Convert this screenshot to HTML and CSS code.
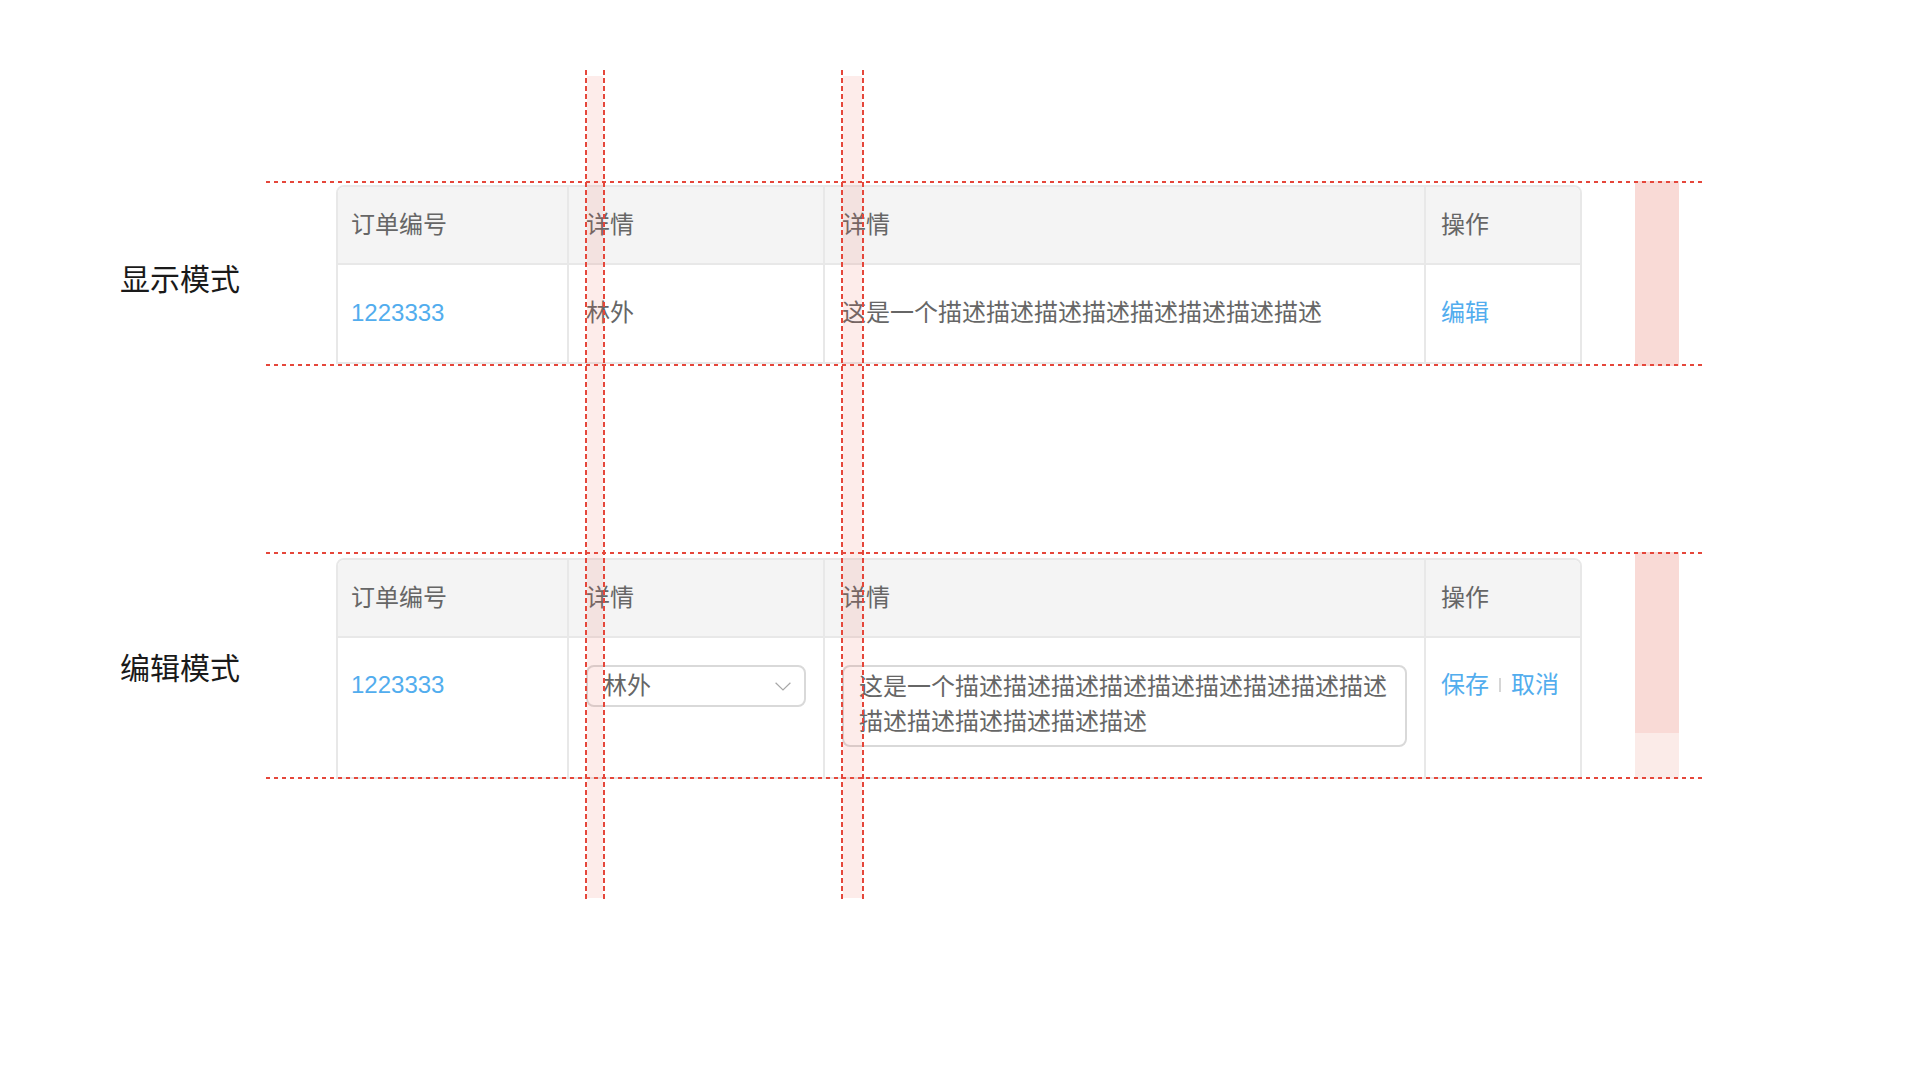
FILE: index.html
```html
<!DOCTYPE html>
<html lang="zh-CN">
<head>
<meta charset="utf-8">
<title>显示模式 / 编辑模式</title>
<link rel="stylesheet" href="styles.css">
</head>
<body>
<div class="page">
  <section class="mode mode-view">
    <h2 class="mode-label">显示模式</h2>
    <div class="frame">
      <div class="table">
        <div class="cell head c1">订单编号</div>
        <div class="cell head">详情</div>
        <div class="cell head">详情</div>
        <div class="cell head c4">操作</div>
        <div class="cell body c1"><a class="link">1223333</a></div>
        <div class="cell body">林外</div>
        <div class="cell body">这是一个描述描述描述描述描述描述描述描述</div>
        <div class="cell body c4"><a class="link">编辑</a></div>
      </div>
      <div class="marker"></div>
    </div>
  </section>

  <section class="mode mode-edit">
    <h2 class="mode-label">编辑模式</h2>
    <div class="frame">
      <div class="table">
        <div class="cell head c1">订单编号</div>
        <div class="cell head">详情</div>
        <div class="cell head">详情</div>
        <div class="cell head c4">操作</div>
        <div class="cell body c1"><a class="link">1223333</a></div>
        <div class="cell body">
          <div class="select">
            <span>林外</span>
            <svg class="chev" width="16" height="9" viewBox="0 0 16 9"><polyline points="0.6,0.8 8,8 15.4,0.8" fill="none" stroke="#a8a8a8" stroke-width="1.2"/></svg>
          </div>
        </div>
        <div class="cell body">
          <div class="textarea">这是一个描述描述描述描述描述描述描述描述描述描述描述描述描述描述描述</div>
        </div>
        <div class="cell body c4">
          <div class="ops"><a class="link">保存</a><span class="sep"></span><a class="link">取消</a></div>
        </div>
      </div>
      <div class="marker marker-split"></div>
    </div>
  </section>

  <div class="guide guide-a"></div>
  <div class="guide guide-b"></div>
</div>
</body>
</html>
```

FILE: styles.css
```css
* {
  box-sizing: border-box;
  margin: 0;
  padding: 0;
}

html,
body {
  background: #ffffff;
}

body {
  width: 1920px;
  height: 1080px;
  overflow: hidden;
  font-family: "Liberation Sans", "Noto Sans CJK SC", sans-serif;
  color: #666666;
}

.page {
  position: relative;
  height: 1080px;
  padding-top: 181px;
}

.mode {
  display: flex;
  align-items: center;
  padding-left: 120px;
}

.mode + .mode {
  margin-top: 186px;
}

.mode-label {
  width: 146px;
  font-size: 30px;
  font-weight: 400;
  line-height: 40px;
  color: #1a1a1a;
  font-family: "Noto Sans CJK SC", sans-serif;
}

.mode-view .mode-label {
  margin-top: 7px;
}

.frame {
  position: relative;
  width: 1436px;
  display: flex;
  padding-left: 70px;
}

.frame::before,
.frame::after {
  content: "";
  position: absolute;
  left: 0;
  right: 0;
  height: 2px;
  background: repeating-linear-gradient(to right, #e5473b 0 4px, transparent 4px 8px);
  z-index: 2;
}

.frame::before {
  top: 0;
}

.frame::after {
  bottom: 0;
}

.mode-view .frame {
  padding-top: 4px;
  padding-bottom: 2px;
}

.mode-edit .frame {
  padding-top: 6px;
}

.table {
  width: 1246px;
  display: grid;
  grid-template-columns: 229px 256px 601px 156px;
  border: 2px solid #e8e8e8;
  border-radius: 8px 8px 0 0;
  overflow: hidden;
}

.cell {
  padding-left: 17px;
  font-size: 24px;
  line-height: 40px;
  border-left: 2px solid #e8e8e8;
}

.cell.c1 {
  border-left: none;
  padding-left: 13px;
}

.cell.c4 {
  padding-left: 15px;
}

.head {
  height: 78px;
  display: flex;
  align-items: center;
  background: #f4f4f4;
  border-bottom: 2px solid #e8e8e8;
}

.body {
  padding-top: 28px;
  padding-bottom: 29px;
}

.mode-edit .body {
  padding-top: 27px;
  padding-bottom: 30px;
}

.link {
  color: #52adee;
  text-decoration: none;
}

.marker {
  position: absolute;
  top: 0;
  bottom: 0;
  right: 23px;
  width: 44px;
  background: #f9dad6;
}

.marker-split {
  background: linear-gradient(to bottom, #f9dad6 0 181px, #fbebe8 181px 100%);
}

.select {
  width: 220px;
  height: 42px;
  display: flex;
  align-items: center;
  justify-content: space-between;
  padding: 0 13px 0 15px;
  border: 2px solid #d9d9d9;
  border-radius: 8px;
  background: #ffffff;
}

.chev {
  display: block;
}

.textarea {
  width: 565px;
  padding: 2px 15px 6px 15px;
  line-height: 35px;
  border: 2px solid #d9d9d9;
  border-radius: 8px;
  background: #ffffff;
}

.ops {
  display: flex;
  align-items: center;
}

.sep {
  width: 2px;
  height: 14px;
  margin: 0 10px;
  background: #d6d6d6;
}

.guide {
  position: absolute;
  top: 70px;
  height: 832px;
  z-index: 5;
  background:
    repeating-linear-gradient(to bottom, #e5473b 0 5px, transparent 5px 8px) left top / 2px 100% no-repeat,
    repeating-linear-gradient(to bottom, #e5473b 0 5px, transparent 5px 8px) right top / 2px 100% no-repeat;
}

.guide::before {
  content: "";
  position: absolute;
  top: 6px;
  bottom: 4px;
  left: 2px;
  right: 2px;
  background: rgba(240, 100, 80, 0.12);
}

.guide-a {
  left: 585px;
  width: 20px;
}

.guide-b {
  left: 841px;
  width: 23px;
}
```
